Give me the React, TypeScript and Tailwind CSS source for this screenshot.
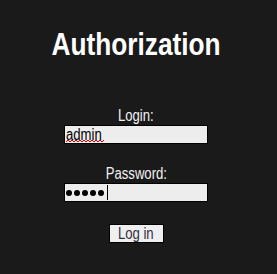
export default function App() {
  return (
    <div
      className="h-[274px] w-[277px] bg-[#1a1a1a] flex flex-col items-center pr-[5px]"
      style={{ fontFamily: '"Liberation Sans", Arial, sans-serif' }}
    >
      {/* narrow face is missing, so squeeze the regular one */}
      <h1 className="mt-[28px] text-[32px] leading-[32px] font-bold text-white scale-x-[0.82]">Authorization</h1>

      <div className="mt-[48px] text-[16px] leading-[16px] text-[#f2f2f2] scale-x-[0.82]">Login:</div>
      <div className="mt-[1px] w-[144px] h-[19px] border border-black bg-[#ededed] pl-[1px] text-[16px] leading-[17px] text-black">
        <span className="relative inline-block">
          <span className="inline-block origin-left scale-x-[0.82]">admin</span>
          <svg className="absolute left-0 top-[13px]" width="38" height="4" viewBox="0 0 38 4">
            <polyline
              points="0,3 2,1 4,3 6,1 8,3 10,1 12,3 14,1 16,3 18,1 20,3 22,1 24,3 26,1 28,3 30,1 32,3 34,1 36,3 38,1"
              fill="none"
              stroke="#e00000"
              strokeWidth="1"
            />
          </svg>
        </span>
      </div>

      <div className="mt-[22px] text-[16px] leading-[16px] text-[#f2f2f2] scale-x-[0.82]">Password:</div>
      <div className="mt-[1px] w-[144px] h-[19px] border border-black bg-[#ededed] pl-[1px] flex items-center gap-[2px]">
        {[0, 1, 2, 3, 4].map((i) => (
          <span key={i} className="w-[6px] h-[6px] rounded-full bg-black" />
        ))}
        <span className="ml-[1px] w-px h-[15px] bg-black" />
      </div>

      <button className="mt-[22px] w-[55px] h-[19px] border border-black bg-[#efefef] text-[16px] leading-[17px] text-[#2f2f3f]">
        <span className="inline-block scale-x-[0.82]">Log in</span>
      </button>
    </div>
  );
}
